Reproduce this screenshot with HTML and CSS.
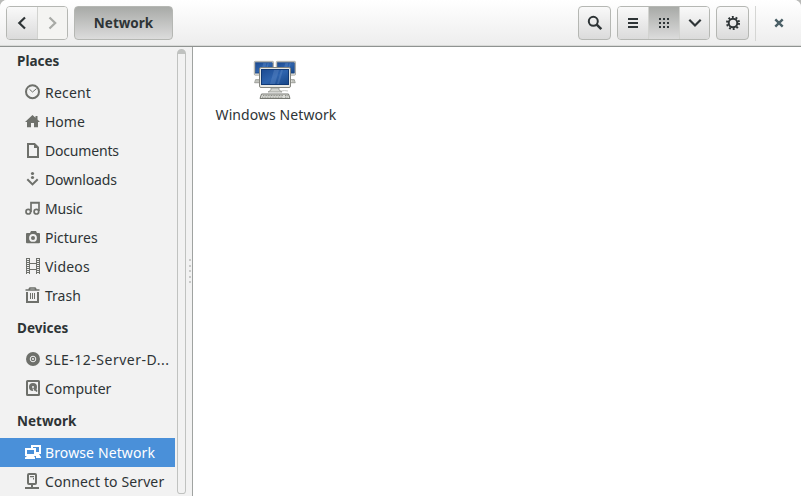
FILE: index.html
```html
<!DOCTYPE html>
<html lang="en">
<head>
<meta charset="utf-8">
<title>Network</title>
<link rel="stylesheet" href="styles.css">
</head>
<body>
<div class="window">
  <header class="headerbar">
    <div class="group">
      <button class="btn nav"><svg viewBox="0 0 16 16"><path d="M11 2.500 5.300 8l5.700 5.500" class="line chevron"/></svg></button>
      <button class="btn nav disabled"><svg viewBox="0 0 16 16"><path d="M4.500 2.500 10.200 8l-5.700 5.500" class="line chevron"/></svg></button>
    </div>
    <button class="btn single path active">Network</button>
    <div class="spacer"></div>
    <button class="btn single tool"><svg viewBox="0 0 16 16"><circle cx="6.3" cy="6.3" r="4.5" class="line"/><path d="M9.7 9.7 14.3 14.2" class="line thick"/></svg></button>
    <div class="group">
      <button class="btn view"><svg viewBox="0 0 16 16"><path d="M3 3h10v2H3zM3 7h10v2H3zM3 11h10v2H3z"/></svg></button>
      <button class="btn view active"><svg viewBox="0 0 16 16"><path d="M3 3h2v2H3zM7 3h2v2H7zM11 3h2v2h-2zM3 7h2v2H3zM7 7h2v2H7zM11 7h2v2h-2zM3 11h2v2H3zM7 11h2v2H7zM11 11h2v2h-2z"/></svg></button>
      <button class="btn view"><svg viewBox="0 0 16 16"><path d="M2.300 4.800 8 10.500 13.700 4.800" class="line chevron"/></svg></button>
    </div>
    <button class="btn single tool"><svg viewBox="0 0 16 16"><circle cx="8" cy="8" r="4.300" class="line"/><circle cx="8" cy="8" r="6" class="teeth"/></svg></button>
    <div class="separator"></div>
    <button class="close"><svg viewBox="0 0 16 16"><path d="M4.300 4.300l7.400 7.400m0-7.400-7.400 7.400"/></svg></button>
  </header>
  <div class="body">
    <aside class="sidebar">
      <nav class="places">
        <h2 class="first">Places</h2>
        <a class="row"><svg viewBox="0 0 16 16"><circle cx="7.500" cy="7.700" r="6.500" class="line"/><path d="M4.500 5.300 7.500 8l4-3.300" class="line thin"/></svg><span class="wide">Recent</span></a>
        <a class="row"><svg viewBox="0 0 16 16"><path d="M7.500 2 0 9h2v5.300h4V10h3v4.300h4V9h2L12.500 6.500V3h-2v1.700z"/></svg><span>Home</span></a>
        <a class="row"><svg viewBox="0 0 16 16"><path d="M3 2h6.500L13 5.500V15H3z" class="line"/><path d="M9 2v4h4z"/></svg><span class="narrow">Documents</span></a>
        <a class="row"><svg viewBox="0 0 16 16"><circle cx="7.500" cy="2.500" r="1.600"/><circle cx="7.500" cy="6.500" r="1.600"/><path d="M2.300 8.200 7.500 13.400 12.700 8.200" class="line"/></svg><span class="narrow">Downloads</span></a>
        <a class="row"><svg viewBox="0 0 16 16"><path d="M6 12V2.500h8V11M6 3h8" class="line mid"/><circle cx="3.300" cy="11.700" r="2.300" class="line mid"/><circle cx="11.400" cy="11.700" r="2.300" class="line mid"/></svg><span class="narrow">Music</span></a>
        <a class="row"><svg viewBox="0 0 16 16"><path fill-rule="evenodd" d="M2 4h3l1-2h5l1 2h2a1 1 0 0 1 1 1v8.300a1 1 0 0 1-1 1H2a1 1 0 0 1-1-1V5a1 1 0 0 1 1-1zM8 5a3.900 3.900 0 1 0 0 7.800A3.900 3.900 0 0 0 8 5z"/><circle cx="8" cy="8.900" r="2"/></svg><span>Pictures</span></a>
        <a class="row"><svg viewBox="0 0 16 16"><path d="M1.500 0v16M4.500 0v16M11.500 0v16M14.500 0v16M4 5.500h8M4 11.500h8" class="line thin"/><path d="M3 0v16M13 0v16" class="line sprocket"/></svg><span class="wide">Videos</span></a>
        <a class="row"><svg viewBox="0 0 16 16"><path d="M.5 3h14M4 2.500 5 1h5l1 1.500" class="line mid"/><path d="M2 5v10h11V5" class="line"/><path d="M5.500 6v6M7.500 6v6M9.500 6v6" class="line thin"/></svg><span>Trash</span></a>
        <h2>Devices</h2>
        <a class="row"><svg viewBox="0 0 16 16"><circle cx="8" cy="8" r="7"/><circle cx="8" cy="8" r="2.800" class="cut"/><circle cx="8" cy="8" r="1" class="cutfill"/></svg><span class="volume">SLE-12-Server-D...</span></a>
        <a class="row"><svg viewBox="0 0 16 16"><rect x="2" y="1" width="12" height="14" rx=".5" class="line"/><circle cx="8" cy="7" r="4"/><circle cx="8" cy="7" r="1" class="cutfill"/><path d="M8 8.500 9.500 13" class="cut"/><path d="M9.500 8.500 12 11.500" class="line mid"/></svg><span>Computer</span></a>
        <h2>Network</h2>
        <a class="row selected"><svg viewBox="0 0 16 16"><path d="M6 1h10v9h-2l2 3v1h-5V8h3V3H8v1H6z"/><path fill-rule="evenodd" d="M0 4h11v8H0zM2 6v4h7V6z"/><path d="M2 12h7l1 1.500V15H0v-1.500z"/></svg><span class="wider">Browse Network</span></a>
        <a class="row"><svg viewBox="0 0 16 16"><rect x="3" y="1" width="8" height="10" rx="1" class="line"/><path d="M5 3h4v1.200H5zM8 5h1v1.500H8zM6 11h2v3H6zM0 14h14v2H0z"/></svg><span class="wider">Connect to Server</span></a>
      </nav>
      <div class="scrollbar"></div>
      <div class="grip"><i></i><i></i><i></i><i></i><i></i></div>
    </aside>
    <main class="content">
      <div class="item">
        <svg class="computers" viewBox="0 0 48 48">
          <defs>
            <linearGradient id="screen" x1="0" y1="0" x2="1" y2="1"><stop offset="0" stop-color="#1c4a91"/><stop offset=".5" stop-color="#2e63ad"/><stop offset="1" stop-color="#174687"/></linearGradient>
            <g id="monitor"><rect x=".5" y=".5" width="31" height="20" rx="1.500" fill="#e9e9e4" stroke="#858680"/><rect x="2.500" y="2.500" width="27" height="15" fill="url(#screen)" stroke="#123a75"/><path d="M15 3h5l-4 14h-5zM22 3h2l-4 14h-2z" fill="#7fa5d6" opacity=".25"/><path d="M12 21h8v2l3 2H9l3-2z" fill="#d3d4cf" stroke="#8b8c87" stroke-width=".7"/><path d="M2.500 27h27l1.500 4.500H1z" fill="#dcddd8" stroke="#777973"/><path d="M4 28.500h20M3 30.200h21M26 28.500h3M26 30.200h3" stroke="#8f918b" stroke-dasharray="1 .6"/></g>
          </defs>
          <use href="#monitor" transform="translate(3 5) scale(.62 .69)"/>
          <use href="#monitor" transform="translate(25 5) scale(.62 .69)"/>
          <path d="M23 35.500c5 1 9-2 14-.5" fill="none" stroke="#c5c6c2"/>
          <use href="#monitor" transform="translate(8 11)"/>
        </svg>
        <span>Windows Network</span>
      </div>
    </main>
  </div>
</div>
</body>
</html>
```

FILE: styles.css
```css
* { box-sizing: border-box; }
body { margin: 0; background: #b9bab8; color: #2e3436; font: 14px/20px "Noto Sans", "Open Sans", sans-serif; overflow: hidden; }
.window { width: 801px; height: 496px; display: flex; flex-direction: column; background: #fff; border-radius: 7px 7px 0 0; overflow: hidden; }
.headerbar { height: 47px; flex: none; display: flex; align-items: flex-start; gap: 6px; padding: 6px 6px 0; background: linear-gradient(#fff, #ededed); border-bottom: 1px solid #8f9391; box-shadow: inset 0 -1px #d9dad8; }
button { font: inherit; color: inherit; padding: 0; margin: 0; border: 0; background: none; display: flex; align-items: center; justify-content: center; }
svg { width: 16px; height: 16px; fill: currentColor; flex: none; overflow: visible; }
.line { fill: none; stroke: currentColor; stroke-width: 2; }
.chevron { stroke-width: 2.200; }
.thick { stroke-width: 2.500; }
.mid { stroke-width: 1.700; }
.thin { stroke-width: 1; }
.teeth { fill: none; stroke: currentColor; stroke-width: 2; stroke-dasharray: 1.900 1.870; }
.sprocket { stroke-width: 2; stroke-dasharray: 1 1; }
.cut { fill: none; stroke: #f2f2f2; stroke-width: 1; }
.cutfill { fill: #f2f2f2; }
.group { display: flex; height: 34px; border: 1px solid #b5b7b3; border-radius: 4px; overflow: hidden; }
.btn { height: 100%; background: linear-gradient(#f9f9f9, #dbdbdb); }
.single { height: 34px; border: 1px solid #b5b7b3; border-radius: 4px; }
.nav { width: 30px; }
.nav + .nav, .view + .view { border-left: 1px solid #d2d3d0; }
.btn.disabled { color: #a8aaa6; background: #f4f4f2; }
.btn.active { background: linear-gradient(#a8aaa7, #dcdcdc); }
.path { width: 99px; font-weight: 700; font-size: 13.500px; }
.tool { width: 33px; }
.view { width: 30px; }
.view + .view { width: 31px; }
.view:last-child { width: 30px; }
.spacer { flex: 1; }
.separator { width: 1px; height: 35px; background: #d5d6d4; }
.close { width: 33px; height: 34px; color: #4b6067; }
.close path { stroke: currentColor; stroke-width: 2.400; }
.body { flex: 1; min-height: 0; display: flex; }
.sidebar { width: 193px; flex: none; display: flex; background: #f2f2f2; border-right: 1px solid #a0a3a1; overflow: hidden; }
.places { width: 175px; flex: none; }
h2 { margin: 0; height: 35px; padding: 8px 0 0 17px; font: 700 13.500px/20px "Noto Sans", sans-serif; }
.first { height: 31px; padding-top: 4px; }
.row { height: 29px; display: flex; align-items: flex-start; gap: 4px; padding: 5px 0 0 25px; white-space: nowrap; }
.row svg { margin-top: 1px; color: #6e706b; }
.wide { letter-spacing: .2px; }
.wider { letter-spacing: .12px; }
.narrow { letter-spacing: -.18px; }
.volume { letter-spacing: .5px; }
.row.selected { background: #4a90d9; color: #fff; }
.row.selected svg { color: #fff; }
.scrollbar { width: 9px; height: 445px; margin: 2px 0 0 2px; border: 1px solid #c0c2c0; border-top-width: 5px; border-radius: 5px 5px 4px 4px; flex: none; }
.grip { margin: 212px 0 0 3px; display: flex; flex-direction: column; gap: 3.500px; }
.grip i { width: 2px; height: 2px; background: #c8c9c8; }
.content { flex: 1; }
.item { width: 122px; margin: 9px 0 0 22px; display: flex; flex-direction: column; align-items: center; white-space: nowrap; letter-spacing: .07px; }
.computers { width: 48px; height: 48px; margin: 0 2px 1px 0; }
```
